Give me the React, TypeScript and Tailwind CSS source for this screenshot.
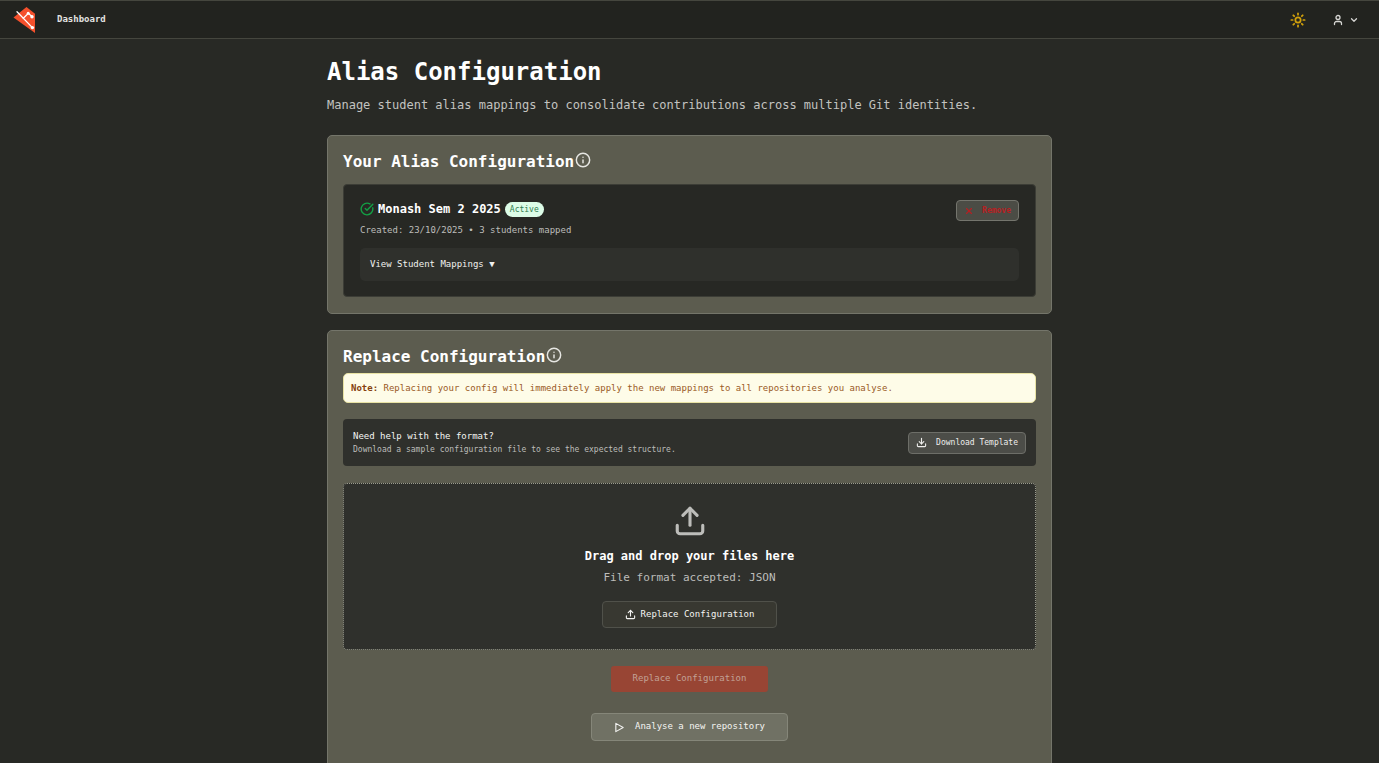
import React from "react";
import { ChevronDown, CircleCheckBig, Download, Info, Sun, Upload, User, X } from "lucide-react";

function Logo() {
  return (
    <svg viewBox="0 0 24 26" className="h-[26px] w-6" aria-hidden="true">
      <path d="M13.5 0 L22 6.8 V26 L0.5 10.4 Z" fill="#f4502c" />
      <g stroke="#fff" strokeWidth="1.3" fill="none" strokeLinecap="round">
        <path d="M4 4.8 L19.4 20.6" />
        <path d="M10.3 11.3 L15.3 6.3 L19 9.6" />
      </g>
      <g fill="#fff">
        <circle cx="15.2" cy="6.2" r="1.5" />
        <circle cx="19" cy="9.7" r="1.7" />
        <circle cx="19.4" cy="20.6" r="1.7" />
      </g>
    </svg>
  );
}

function PlayIcon() {
  return (
    <svg viewBox="0 0 24 24" className="size-[11px]" fill="none" stroke="currentColor" strokeWidth="2.4" strokeLinejoin="round" aria-hidden="true">
      <path d="M4 3 L20 12 L4 21 Z" />
    </svg>
  );
}

function Header() {
  return (
    <header className="flex h-[39px] shrink-0 items-center justify-between border-y border-[#45463e] bg-[#22231f] pr-5 pl-[13px]">
      <div className="flex items-center gap-5">
        <Logo />
        <nav className="flex">
          <a href="#dashboard" className="pb-px text-[9px] leading-3 font-bold text-[#e4e4e2]">
            Dashboard
          </a>
        </nav>
      </div>
      <div className="flex items-center gap-[26px]">
        <button type="button" aria-label="Toggle theme" className="text-[#d0a00c]">
          <Sun size={16} strokeWidth={2.6} />
        </button>
        <button type="button" aria-label="Account" className="flex items-center gap-[5px] text-[#d6d6d3]">
          <User size={12} strokeWidth={2.6} />
          <ChevronDown size={10} strokeWidth={3} />
        </button>
      </div>
    </header>
  );
}

function SectionTitle({ children, help }: { children: React.ReactNode; help: string }) {
  return (
    <div className="flex items-center gap-px">
      <h2 className="text-[16px] leading-5 font-bold text-white">{children}</h2>
      <button type="button" aria-label={help} className="mb-1 text-[#e6e6e2]">
        <Info size={16} strokeWidth={2.2} />
      </button>
    </div>
  );
}

const card = "rounded-[5px] border border-[#74756a] bg-[#5c5c4f] px-[15px]";

export default function App() {
  return (
    <div className="flex h-screen flex-col overflow-y-auto bg-[#282925] font-['DejaVu_Sans_Mono',monospace] text-white [scrollbar-width:none]">
      <Header />
      <main className="mx-auto flex w-full max-w-[725px] flex-1 flex-col">
        <h1 className="mt-[17px] text-[24px] leading-8 font-bold">Alias Configuration</h1>
        <p className="mt-[7px] text-[12px] leading-5 text-[#c3c3c0]">
          Manage student alias mappings to consolidate contributions across multiple Git identities.
        </p>

        <section className={`${card} mt-5 pt-4 pb-4`}>
          <SectionTitle help="About your alias configuration">Your Alias Configuration</SectionTitle>
          <div className="mt-3 rounded-[4px] border border-[#3c3d36] bg-[#272824] px-4 py-[15px]">
            <div className="flex items-start justify-between">
              <div>
                <div className="flex h-[18px] items-center">
                  <CircleCheckBig size={14} strokeWidth={2.4} className="mr-1 text-[#13a045]" />
                  <h3 className="text-[12px] leading-4 font-bold">Monash Sem 2 2025</h3>
                  <span className="ml-1 rounded-full bg-[#dcfce7] px-[5px] text-[8px] leading-[15px] text-[#2f7d4f]">
                    Active
                  </span>
                </div>
                <p className="mt-1 text-[9px] leading-4 text-[#bdbdba]">Created: 23/10/2025 • 3 students mapped</p>
              </div>
              <button
                type="button"
                className="flex h-[21px] items-center gap-2 rounded-[4px] border border-[#74756d] bg-[#4b4c45] px-[7px] text-[8px] font-bold text-[#b81f22]"
              >
                <X size={10} strokeWidth={2.6} />
                Remove
              </button>
            </div>
            <button
              type="button"
              aria-expanded="false"
              className="mt-[10px] block h-[33px] w-full rounded-[5px] bg-[#2f302c] px-[10px] text-left text-[9px] text-[#f0f0ee]"
            >
              View Student Mappings ▼
            </button>
          </div>
        </section>

        <section className={`${card} mt-4 flex-1 pt-4 pb-8`}>
          <SectionTitle help="About replacing the configuration">Replace Configuration</SectionTitle>
          <p className="mt-1.5 rounded-[5px] border border-[#e9e3a4] bg-[#fefce8] px-[7px] text-[9px] leading-7 text-[#9a5a26]">
            <strong className="text-[#85400f]">Note:</strong> Replacing your config will immediately apply the new
            mappings to all repositories you analyse.
          </p>

          <div className="mt-4 flex h-[47px] items-center justify-between rounded-[4px] bg-[#2f302c] px-[10px]">
            <div>
              <h3 className="text-[9px] leading-[14px] font-medium text-[#f4f4f2]">Need help with the format?</h3>
              <p className="text-[8px] leading-[14px] text-[#bdbdba]">
                Download a sample configuration file to see the expected structure.
              </p>
            </div>
            <button
              type="button"
              className="flex h-[22px] items-center gap-[9px] rounded-[4px] border border-[#6d6e68] bg-[#4c4d48] px-[7px] text-[8px] font-medium text-[#eeeeec]"
            >
              <Download size={11} strokeWidth={2.4} />
              Download Template
            </button>
          </div>

          <div className="mt-[17px] flex h-[167px] flex-col items-center rounded-[4px] border border-dotted border-[#9a9b8d] bg-[#2f302c] pt-5">
            <Upload size={34} strokeWidth={2.2} className="text-[#bdbdba]" />
            <p className="mt-2 text-[12px] leading-5 font-bold">Drag and drop your files here</p>
            <p className="mt-1 text-[11px] leading-4 text-[#bdbdba]">File format accepted: JSON</p>
            <button
              type="button"
              className="mt-[15px] flex h-[27px] items-center gap-[5px] rounded-[4px] border border-[#50514a] bg-[#383831] px-[22px] text-[9px] font-medium text-[#f4f4f2]"
            >
              <Upload size={11} strokeWidth={2.4} />
              Replace Configuration
            </button>
          </div>

          <div className="mt-4 flex flex-col items-center gap-[21px]">
            <button
              type="button"
              disabled
              className="h-[26px] rounded-[3px] bg-[#984534] px-[22px] text-[9px] text-[#c2a195]"
            >
              Replace Configuration
            </button>
            <button
              type="button"
              className="flex h-7 items-center gap-[10px] rounded-[4px] border border-[#858679] bg-[#707164] px-[22px] text-[9px] font-medium text-[#f4f4f2]"
            >
              <PlayIcon />
              Analyse a new repository
            </button>
          </div>
        </section>
      </main>
    </div>
  );
}
